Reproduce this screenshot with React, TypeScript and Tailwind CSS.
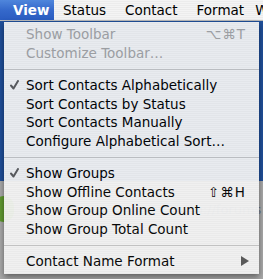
import React from "react";

type Item =
  | { kind: "sep" }
  | { kind: "item"; label: string; disabled?: boolean; checked?: boolean; shortcut?: string; submenu?: boolean };

const items: Item[] = [
  { kind: "item", label: "Show Toolbar", disabled: true, shortcut: "⌥⌘T" },
  { kind: "item", label: "Customize Toolbar…", disabled: true },
  { kind: "sep" },
  { kind: "item", label: "Sort Contacts Alphabetically", checked: true },
  { kind: "item", label: "Sort Contacts by Status" },
  { kind: "item", label: "Sort Contacts Manually" },
  { kind: "item", label: "Configure Alphabetical Sort…" },
  { kind: "sep" },
  { kind: "item", label: "Show Groups", checked: true },
  { kind: "item", label: "Show Offline Contacts", shortcut: "⇧⌘H" },
  { kind: "item", label: "Show Group Online Count" },
  { kind: "item", label: "Show Group Total Count" },
  { kind: "sep" },
  { kind: "item", label: "Contact Name Format", submenu: true },
];

function Check() {
  return (
    <svg width="9" height="10" viewBox="0 0 9 10" className="block">
      <path d="M1 5.5 L3.5 8.5 L8 1" fill="none" stroke="#5a5a5a" strokeWidth="2" strokeLinejoin="round" strokeLinecap="round" />
    </svg>
  );
}

export default function App() {
  return (
    <div
      className="relative w-[263px] h-[279px] overflow-hidden"
      style={{ fontFamily: '"DejaVu Sans", "Liberation Sans", sans-serif' }}
    >
      {/* menu bar */}
      <div className="h-[21px] flex items-stretch text-[13.5px] text-black bg-[repeating-linear-gradient(0deg,#ececec_0px,#ececec_1px,#f4f4f4_1px,#f4f4f4_2px)] border-b border-[#b9b9b9]">
        <div className="w-[54px] shrink-0 flex items-center pl-[13px] text-white font-bold bg-[linear-gradient(180deg,#4f86dc_0%,#3569cb_50%,#2a5cc0_100%)]">
          View
        </div>
        <div className="pl-[9px] shrink-0 flex items-center">Status</div>
        <div className="pl-[19px] shrink-0 flex items-center">Contact</div>
        <div className="pl-[19px] shrink-0 flex items-center">Format</div>
        <div className="pl-[11px] shrink-0 flex items-center">W</div>
      </div>
      {/* backdrop */}
      <div className="flex flex-col h-[258px]">
        <div className="h-[160px] bg-[#1f4f99]" />
        <div className="flex-1 bg-[#a9a9a9]" />
      </div>
      {/* faint window content behind translucent menu */}
      <div className="absolute left-[-6px] top-[196px] w-[20px] h-[26px] rounded-full bg-[#5f9a2f]" />
      <div className="absolute left-[160px] top-[202px] w-[12px] h-[12px] bg-[#8fa6c8]" />
      <div className="absolute left-[176px] top-[200px] text-[13px] text-[#6d7a8a]">http://forums</div>

      {/* dropdown menu */}
      <div className="absolute left-[4px] top-[22px] w-[255px] pt-[3px] pb-[3px] text-[13.5px] bg-[repeating-linear-gradient(0deg,#efefef_0px,#efefef_1px,#f5f5f5_1px,#f5f5f5_2px)] opacity-[0.94] shadow-[0_3px_6px_rgba(0,0,0,0.45)]">
        {items.map((it, i) =>
          it.kind === "sep" ? (
            <div key={i} className="h-[14px] flex items-center">
              <div className="w-full h-px bg-[#c4c4c4]" />
            </div>
          ) : (
            <div
              key={i}
              className={`h-[18.5px] flex items-center ${it.disabled ? "text-[#a3a3a3]" : "text-black"}`}
            >
              <div className="w-[22px] pl-[6px] flex items-center">{it.checked && <Check />}</div>
              <div className="flex-1 whitespace-nowrap">{it.label}</div>
              {it.shortcut && (
                <div className={`pr-[13px] tracking-[1px] ${it.disabled ? "text-[#a3a3a3]" : "text-black"}`}>{it.shortcut}</div>
              )}
              {it.submenu && (
                <div className="pr-[10px]">
                  <svg width="8" height="10" viewBox="0 0 8 10" className="block">
                    <path d="M0 0 L8 5 L0 10 Z" fill="#555" />
                  </svg>
                </div>
              )}
            </div>
          )
        )}
      </div>
    </div>
  );
}
